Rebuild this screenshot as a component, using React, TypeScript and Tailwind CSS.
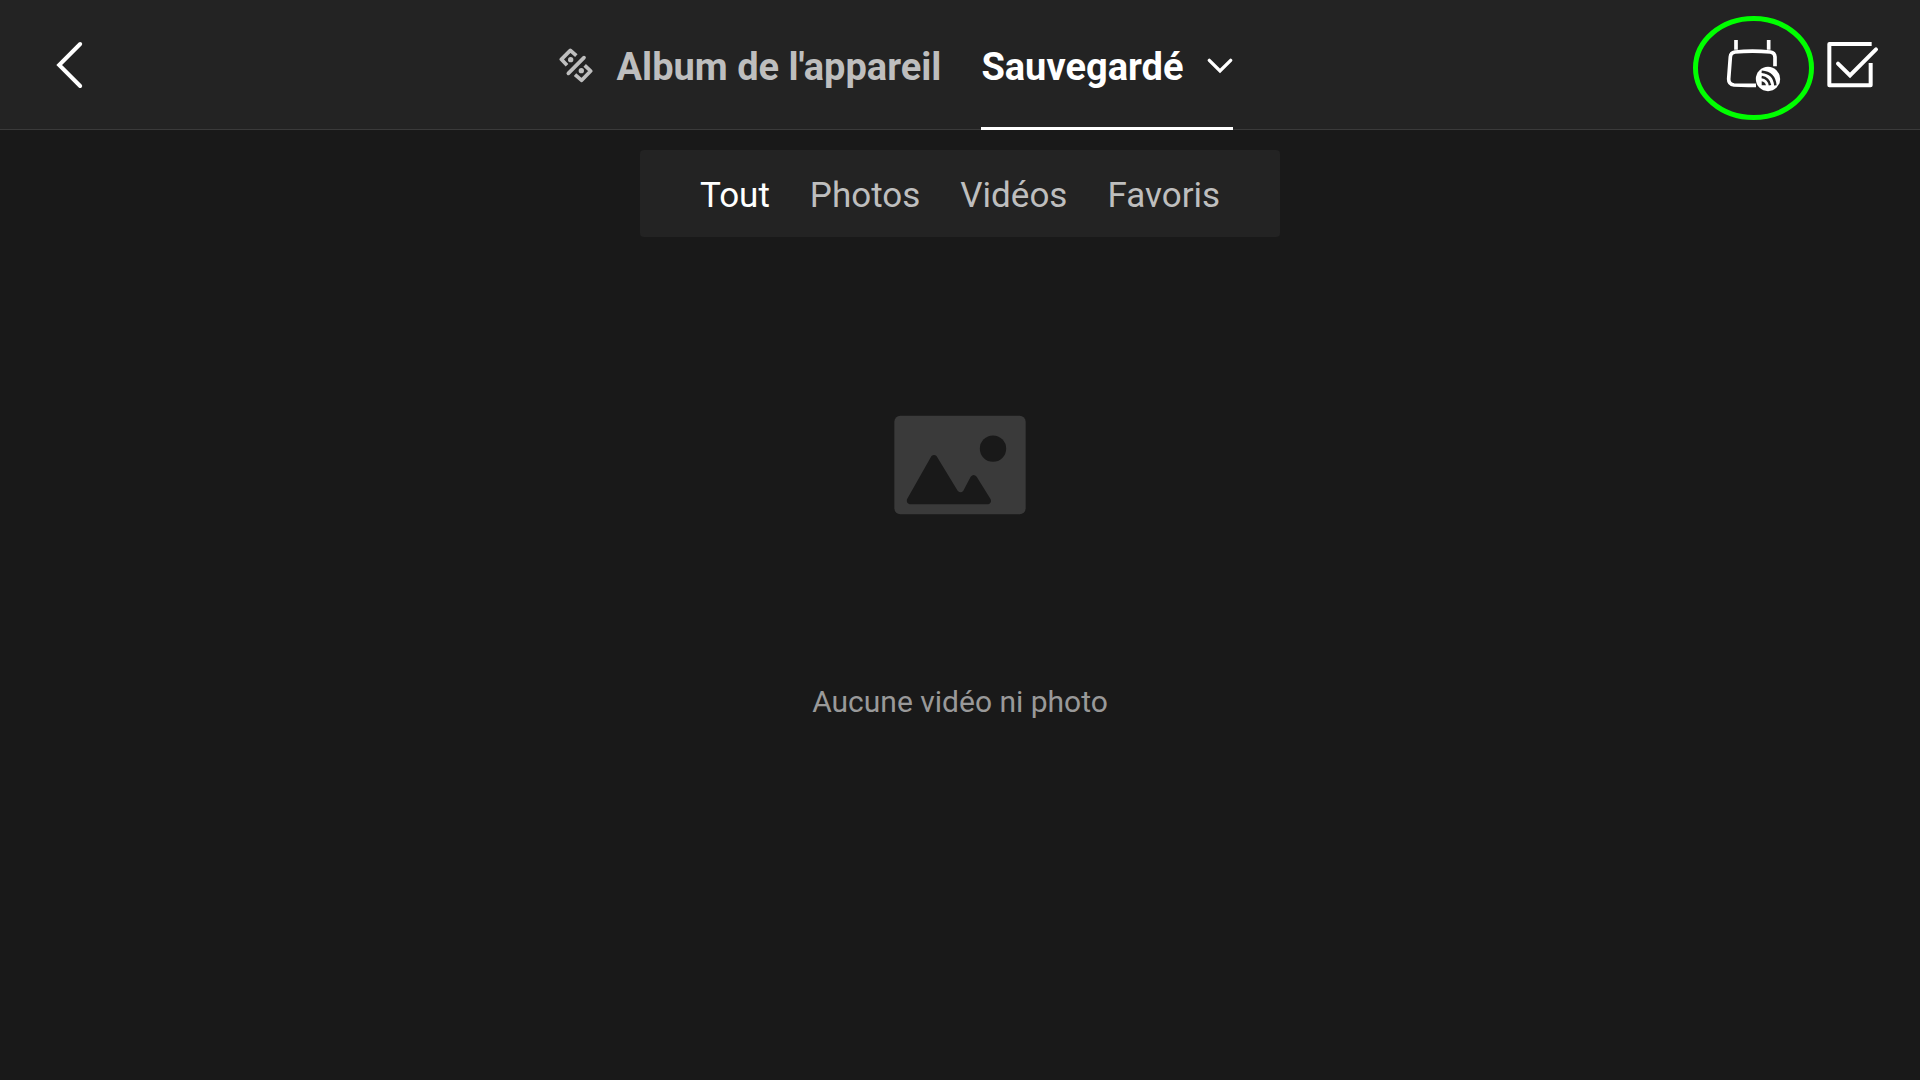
function BackIcon() {
  return (
    <svg viewBox="78 63 80 144" className="block h-12 w-[27px]" fill="none" stroke="#fff" strokeWidth="12" strokeLinecap="round" strokeLinejoin="miter" aria-hidden="true">
      <path d="M150 72 L87 135 L150 198" />
    </svg>
  );
}

function DeviceIcon() {
  return (
    <svg viewBox="60 54 102 105" className="block h-[35px] w-[34px]" fill="none" stroke="#bebebe" strokeWidth="11" aria-hidden="true">
      <path d="M112 77 L94 61 L67 88 L84 106" strokeLinejoin="round" />
      <path d="M108 134 L128 151 L155 123 L137 106" strokeLinejoin="round" />
      <path d="M135 83 L88 130" strokeLinecap="round" />
      <circle cx="95" cy="89" r="8" fill="#bebebe" stroke="none" />
      <circle cx="127" cy="122" r="8" fill="#bebebe" stroke="none" />
    </svg>
  );
}

function ChevronIcon() {
  return (
    <svg viewBox="792 108 78 54" className="block h-[18px] w-[26px]" fill="none" stroke="#fff" strokeWidth="10" strokeLinecap="round" aria-hidden="true">
      <path d="M799 118 L831 150 L863 118" />
    </svg>
  );
}

function TransmissionIcon() {
  return (
    <svg viewBox="39 33 363 312" className="block h-[104px] w-[121px]" fill="none" aria-hidden="true">
      <ellipse cx="220.5" cy="189" rx="174" ry="148.5" stroke="#00ff00" strokeWidth="15" />
      <g stroke="#fff" strokeWidth="11">
        <path d="M168 105 V134 M266 105 V134" />
        <path d="M285 184 L285 156 Q284 143 271 141 Q217 136 165 141 Q152 143 151 156 L146 222 Q146 238 162 240 Q192 242 228 241" />
      </g>
      <circle cx="264" cy="222" r="36.5" fill="#fff" />
      <g stroke="#232323" strokeWidth="7.5">
        <path d="M245 200 Q283 203 286 241" />
        <path d="M245 216 Q266 219 270 241" />
      </g>
      <path d="M245 229 Q255 231 258 241 H245 Z" fill="#232323" />
    </svg>
  );
}

function SelectIcon() {
  return (
    <svg viewBox="51 63 156 144" className="block h-12 w-[52px]" fill="none" stroke="#fff" strokeWidth="12" aria-hidden="true">
      <path d="M185 72 H58 V196 H182 V129" strokeLinejoin="round" />
      <path d="M84 131 L120 166 L198 88" strokeLinecap="round" />
    </svg>
  );
}

function EmptyIcon() {
  return (
    <svg viewBox="42 45 396 300" className="block h-[100px] w-[132px]" aria-hidden="true">
      <rect x="43" y="47" width="394" height="296" rx="18" fill="#3a3a3a" />
      <circle cx="339" cy="146" r="39.5" fill="#191919" />
      <path
        d="M154 169 Q162 161 170 169 L233 272 Q242 281 250 272 L272 230 Q281 220 290 230 L332 298 Q336 309 325 313 H89 Q78 310 81 298 Z"
        fill="#191919"
      />
    </svg>
  );
}

const filters = ["Tout", "Photos", "Vidéos", "Favoris"];

export default function App() {
  return (
    <div className="flex min-h-screen flex-col bg-[#191919] font-['Roboto',sans-serif] text-white">
      <header className="grid h-[130px] grid-cols-[1fr_auto_1fr] border-b border-[#3a3a3a] bg-[#232323]">
        <button type="button" aria-label="Retour" className="ml-14 self-center justify-self-start">
          <BackIcon />
        </button>
        <nav aria-label="Albums" className="-mb-px flex gap-10 pr-32 text-[38px] font-bold">
          <button type="button" className="flex items-center gap-6 border-b-3 border-transparent pt-1 text-[#bebebe]">
            <DeviceIcon />
            <span className="pt-1">Album de l'appareil</span>
          </button>
          <button type="button" aria-current="page" className="flex items-center gap-6 border-b-3 border-white pt-1">
            <span className="pt-1">Sauvegardé</span>
            <ChevronIcon />
          </button>
        </nav>
        <div className="mr-[41px] flex items-center gap-[13px] justify-self-end">
          <button type="button" aria-label="Transmission rapide" className="mt-1.5">
            <TransmissionIcon />
          </button>
          <button type="button" aria-label="Sélectionner">
            <SelectIcon />
          </button>
        </div>
      </header>
      <main className="flex flex-1 flex-col items-center pt-5">
        <div className="flex items-center gap-10 rounded-[4px] bg-[#232323] px-[60px] pt-[22px] pb-[17px] text-[35px] leading-12 text-[#bebebe]">
          {filters.map((name, i) => (
            <button key={name} type="button" aria-pressed={i === 0} className="aria-pressed:text-white">
              {name}
            </button>
          ))}
        </div>
        <div className="mt-[178px] flex flex-col items-center gap-[167px]">
          <EmptyIcon />
          <p className="text-[30px] leading-10 text-[#999999]">Aucune vidéo ni photo</p>
        </div>
      </main>
    </div>
  );
}
